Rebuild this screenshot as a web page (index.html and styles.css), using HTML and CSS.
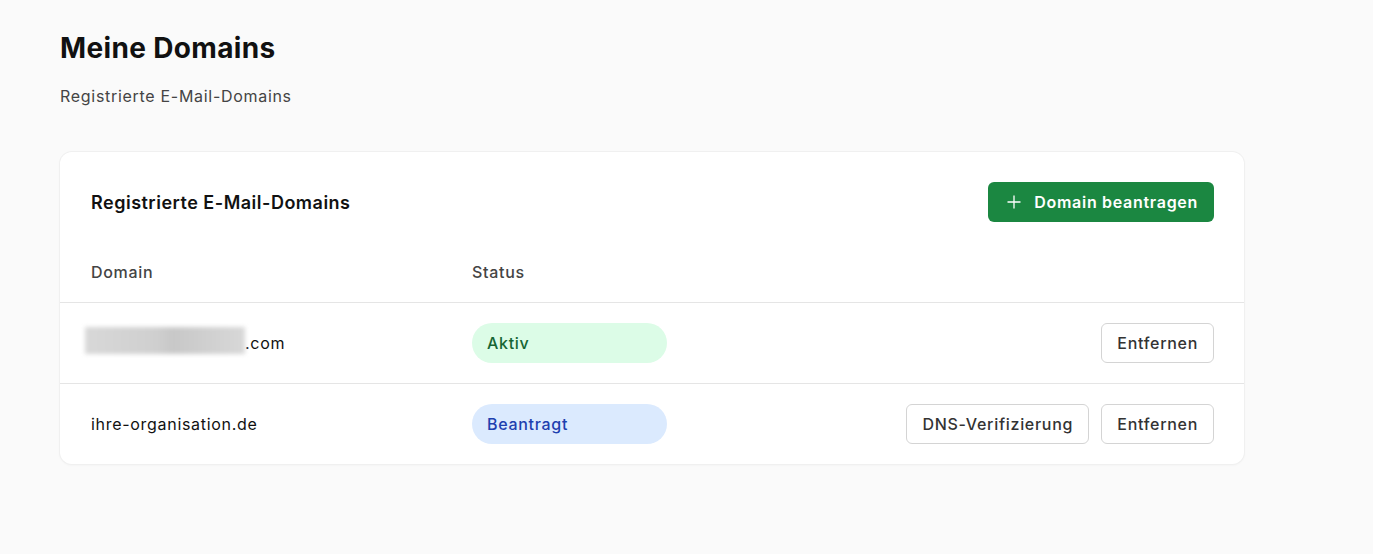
FILE: index.html
```html
<!doctype html>
<html lang="de">
<head>
    <meta charset="UTF-8">
    <meta name="viewport" content="width=device-width, initial-scale=1.0">
    <title>Meine Domains</title>
    <link rel="stylesheet" href="styles.css">
</head>
<body>
    <div class="page">
        <h1 class="page-title">Meine Domains</h1>
        <p class="page-sub">Registrierte E-Mail-Domains</p>

        <div class="card">
            <div class="card-head">
                <h2>Registrierte E-Mail-Domains</h2>
                <button class="btn-primary">
                    <svg width="16" height="16" viewBox="0 0 16 16" fill="none" stroke="currentColor" stroke-width="1.3"><path d="M8 1.5v13M1.5 8h13"/></svg>
                    Domain beantragen
                </button>
            </div>

            <table class="domains">
                <thead>
                    <tr>
                        <th class="col-domain">Domain</th>
                        <th class="col-status">Status</th>
                        <th></th>
                    </tr>
                </thead>
                <tbody>
                    <tr>
                        <td><span class="hidden-name" aria-hidden="true"></span>.com</td>
                        <td><span class="badge badge-green">Aktiv</span></td>
                        <td class="actions">
                            <button class="btn">Entfernen</button>
                        </td>
                    </tr>
                    <tr>
                        <td>ihre-organisation.de</td>
                        <td><span class="badge badge-blue">Beantragt</span></td>
                        <td class="actions">
                            <button class="btn">DNS-Verifizierung</button>
                            <button class="btn">Entfernen</button>
                        </td>
                    </tr>
                </tbody>
            </table>
        </div>
    </div>
</body>
</html>
```

FILE: styles.css
```css
*{
    box-sizing: border-box;
}

body{
    margin: 0;
    background-color: #fafafa;
    font-family: Inter, "Noto Sans", sans-serif;
    letter-spacing: 0.7px;
    color: #111;
}

button{
    font-family: inherit;
    letter-spacing: inherit;
    cursor: pointer;
}

.page{
    padding: 30px 60px;
}

.page-title{
    margin: 0;
    font-size: 28px;
    font-weight: 700;
    letter-spacing: 0.35px;
    line-height: 36px;
}

.page-sub{
    margin: 20px 0 0;
    font-size: 16px;
    line-height: 20px;
    color: #444;
}

.card{
    width: 1184px;
    margin-top: 46px;
    background-color: #fff;
    border-radius: 12px;
    box-shadow: 0 0 0 1px #f0f0f0, 0 1px 3px rgba(0, 0, 0, 0.05);
    padding-top: 30px;
}

.card-head{
    display: flex;
    align-items: center;
    justify-content: space-between;
    padding: 0 30px 0 31px;
}

.card-head h2{
    margin: 0;
    font-size: 18px;
    font-weight: 600;
    letter-spacing: 0.5px;
}

.btn-primary{
    display: flex;
    align-items: center;
    gap: 12px;
    height: 40px;
    padding: 0 16px 0 18px;
    border: none;
    border-radius: 6px;
    background-color: #1b8741;
    color: #fff;
    font-size: 16px;
    font-weight: 600;
}

.domains{
    width: 100%;
    margin-top: 20px;
    border-collapse: collapse;
}

.domains th{
    height: 60px;
    padding: 0 30px 0 31px;
    text-align: left;
    font-size: 16px;
    font-weight: 500;
    color: #444;
    vertical-align: middle;
}

.domains th.col-domain{
    width: 381px;
}

.domains th.col-status{
    width: 255px;
}

.domains td{
    height: 81px;
    padding: 0 30px 0 31px;
    border-top: 1px solid #e5e5e5;
    font-size: 16px;
    color: #111;
    vertical-align: middle;
}

/* masked part of the first domain; negative margins keep the line box */
.hidden-name{
    display: inline-block;
    width: 160px;
    height: 27px;
    margin: -7px 0 -1px -6px;
    vertical-align: -4px;
    background: linear-gradient(90deg, #d8d8d8, #cfcfcf 45%, #c8c8c8 55%, #d8d8d8);
    filter: blur(2px);
}

.badge{
    display: block;
    width: 195px;
    height: 40px;
    line-height: 40px;
    padding: 0 15px;
    border-radius: 20px;
    font-size: 16px;
    font-weight: 500;
}

.badge-green{
    background-color: #dcfce7;
    color: #166534;
}

.badge-blue{
    background-color: #dbeafe;
    color: #1e40af;
}

.actions{
    text-align: right;
}

.btn{
    height: 40px;
    padding: 0 15px;
    margin-left: 7px;
    border: 1px solid #d4d4d4;
    border-radius: 6px;
    background-color: #fff;
    color: #333;
    font-size: 16px;
    font-weight: 500;
}
```
